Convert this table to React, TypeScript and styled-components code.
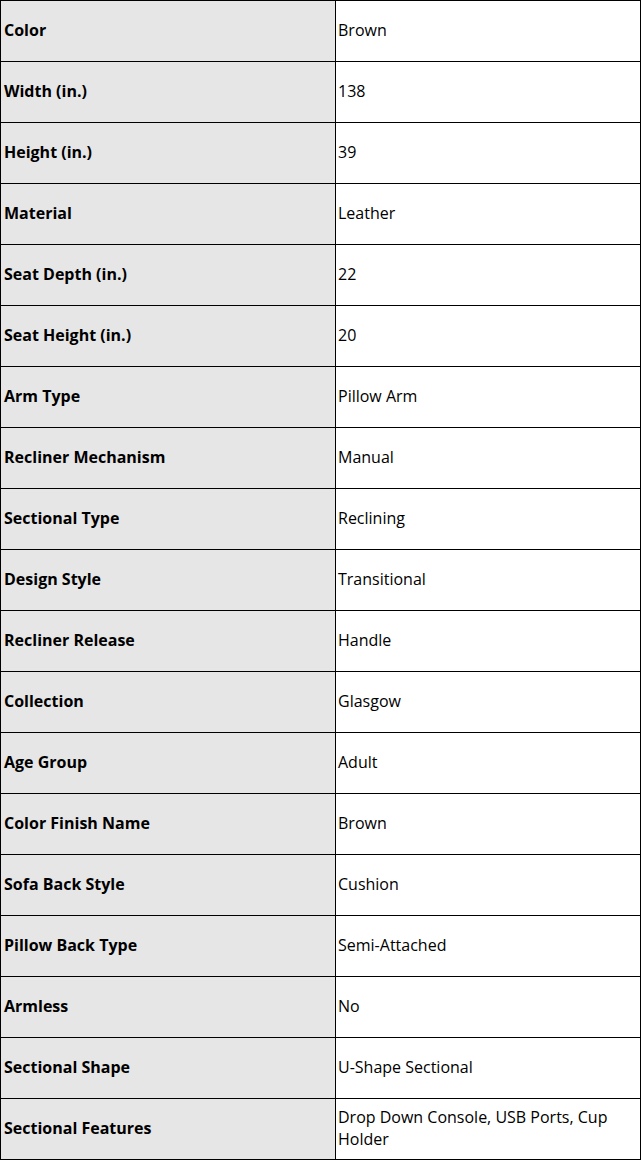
import React from "react";
import styled, { createGlobalStyle } from "styled-components";

const Global = createGlobalStyle`
  html, body { margin: 0; padding: 0; background: #fff; }
  body { font-family: "Open Sans", "Noto Sans", sans-serif; color: #000; }
`;

const Table = styled.table`
  border-collapse: collapse;
  table-layout: fixed;
  width: 641px;
  font-size: 16px;
  line-height: 22px;
`;

const Row = styled.tr`
  height: 61px;
`;

const Label = styled.th`
  width: 335px;
  box-sizing: border-box;
  background: #e6e6e6;
  border: 1px solid #000;
  text-align: left;
  font-weight: 700;
  padding: 0 0 2px 3px;
  vertical-align: middle;
`;

const Value = styled.td`
  border: 1px solid #000;
  padding: 0 2px 2px 2px;
  vertical-align: middle;
`;

const rows: [string, string][] = [
  ["Color", "Brown"],
  ["Width (in.)", "138"],
  ["Height (in.)", "39"],
  ["Material", "Leather"],
  ["Seat Depth (in.)", "22"],
  ["Seat Height (in.)", "20"],
  ["Arm Type", "Pillow Arm"],
  ["Recliner Mechanism", "Manual"],
  ["Sectional Type", "Reclining"],
  ["Design Style", "Transitional"],
  ["Recliner Release", "Handle"],
  ["Collection", "Glasgow"],
  ["Age Group", "Adult"],
  ["Color Finish Name", "Brown"],
  ["Sofa Back Style", "Cushion"],
  ["Pillow Back Type", "Semi-Attached"],
  ["Armless", "No"],
  ["Sectional Shape", "U-Shape Sectional"],
  ["Sectional Features", "Drop Down Console, USB Ports, Cup Holder"],
];

export default function App() {
  return (
    <>
      <Global />
      <Table>
        <tbody>
          {rows.map(([k, v]) => (
            <Row key={k}>
              <Label>{k}</Label>
              <Value>{v}</Value>
            </Row>
          ))}
        </tbody>
      </Table>
    </>
  );
}
